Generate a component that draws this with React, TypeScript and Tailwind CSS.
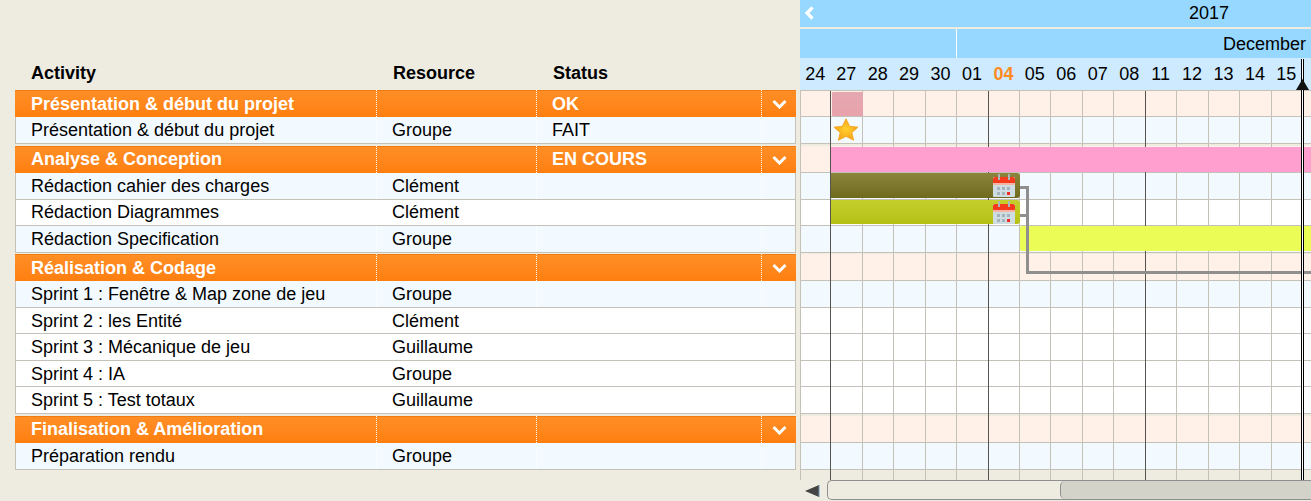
const days = ['24', '27', '28', '29', '30', '01', '04', '05', '06', '07', '08', '11', '12', '13', '14', '15']

type Row = {
  name: string
  resource?: string
  status?: string
  group?: boolean
  white?: boolean
  h: string
  lead?: string
}

const rows: Row[] = [
  { name: 'Présentation & début du projet', status: 'OK', group: true, h: 'h-[27px]', lead: 'leading-[29px]' },
  { name: 'Présentation & début du projet', resource: 'Groupe', status: 'FAIT', h: 'h-[27px] mb-[2px]' },
  { name: 'Analyse & Conception', status: 'EN COURS', group: true, h: 'h-[27px]' },
  { name: 'Rédaction cahier des charges', resource: 'Clément', h: 'h-[27px]' },
  { name: 'Rédaction Diagrammes', resource: 'Clément', white: true, h: 'h-[26px]', lead: 'leading-[25px]' },
  { name: 'Rédaction Specification', resource: 'Groupe', h: 'h-[27px] mb-[1px]' },
  { name: 'Réalisation & Codage', group: true, h: 'h-[27px]', lead: 'leading-[29px]' },
  { name: 'Sprint 1 : Fenêtre & Map zone de jeu', resource: 'Groupe', h: 'h-[27px]' },
  { name: 'Sprint 2 : les Entité', resource: 'Clément', white: true, h: 'h-[26px]' },
  { name: 'Sprint 3 : Mécanique de jeu', resource: 'Guillaume', white: true, h: 'h-[27px]' },
  { name: 'Sprint 4 : IA', resource: 'Groupe', white: true, h: 'h-[26px]' },
  { name: 'Sprint 5 : Test totaux', resource: 'Guillaume', white: true, h: 'h-[27px] mb-[2px]' },
  { name: 'Finalisation & Amélioration', group: true, h: 'h-[27px]' },
  { name: 'Préparation rendu', resource: 'Groupe', h: 'h-[27px]' },
]

function Chevron() {
  return (
    <svg width="15" height="10" viewBox="0 0 15 10" className="ml-px block">
      <path d="M1.5 2 L7.5 8 L13.5 2" fill="none" stroke="white" strokeWidth="3" />
    </svg>
  )
}

function CalendarIcon() {
  return (
    <svg width="22" height="23" viewBox="0 0 22 23" className="block">
      <rect x="0" y="3" width="22" height="20" rx="1" fill="#cfdde3" />
      <path d="M0 10 V5 Q0 3 2 3 H20 Q22 3 22 5 V10 Z" fill="#f63a1e" />
      <rect x="0" y="9" width="22" height="2" fill="#f6b4a4" />
      <rect x="5" y="0" width="2" height="6" fill="#aab6ba" />
      <rect x="15" y="0" width="2" height="6" fill="#aab6ba" />
      <rect x="4" y="13" width="3" height="3" fill="#a5b3ba" />
      <rect x="9" y="13" width="3" height="3" fill="#a5b3ba" />
      <rect x="14" y="13" width="3" height="3" fill="#a5b3ba" />
      <rect x="4" y="18" width="3" height="3" fill="#a5b3ba" />
      <rect x="9" y="18" width="3" height="3" fill="#a5b3ba" />
      <rect x="14" y="18" width="3" height="3" fill="#f02a20" />
    </svg>
  )
}

function LeftTable() {
  return (
    <div className="w-[800px] shrink-0 pl-[15px] pr-[4px]">
      <div className="flex h-[90px] items-end pb-[3px] text-[18px] font-bold text-black">
        <div className="w-[362px] pl-[16px]">Activity</div>
        <div className="w-[160px] pl-[16px]">Resource</div>
        <div className="pl-[16px]">Status</div>
      </div>
      {rows.map((r) => (
        <div
          key={r.name + r.group}
          className={`flex items-center text-[18px] ${r.h} ${r.lead ?? 'leading-[27px]'} ${
            r.group
              ? 'bg-gradient-to-b from-[#ff8f26] to-[#ff7f0f] font-bold text-white shadow-[inset_0_1px_0_#f27a12]'
              : r.white
                ? 'border-x border-b border-[#c4c2b8] bg-white text-black'
                : 'border-x border-b border-[#c4c2b8] bg-[#f2faff] text-black'
          }`}
        >
          <div className={`h-full border-r border-dotted border-white ${r.group ? 'w-[362px] pl-[16px]' : 'w-[361px] pl-[15px]'}`}>
            {r.name}
          </div>
          <div className="h-full w-[160px] border-r border-dotted border-white pl-[15px]">{r.resource}</div>
          <div className="h-full w-[225px] border-r border-dotted border-white pl-[15px]">{r.status}</div>
          <div className="flex flex-1 items-center justify-center">{r.group && <Chevron />}</div>
        </div>
      ))}
    </div>
  )
}

function GanttHeader() {
  return (
    <div className="h-[90px] text-[18px] text-black">
      <div className="relative h-[27px] bg-[#96d8ff] pl-[389px] leading-[26px]">
        <svg width="12" height="14" viewBox="0 0 12 14" className="absolute left-[3px] top-[6px]">
          <path d="M9.5 1.5 L4 7 L9.5 12.5" fill="none" stroke="white" strokeWidth="3.2" />
        </svg>
        <span>2017</span>
      </div>
      <div className="mt-[2px] flex h-[29px]">
        <div className="w-[157px] border-r border-white bg-[#96d8ff]" />
        <div className="flex-1 bg-[#96d8ff] pr-[5px] text-right leading-[31px]">December</div>
      </div>
      <div className="flex h-[32px] items-center bg-[#cdeafe]">
        {days.map((d, i) => (
          <div
            key={d}
            className={`shrink-0 text-center ${i === 0 ? 'w-[30.5px]' : 'w-[31.45px]'} ${
              d === '04' ? 'font-bold text-[#ff8a22]' : ''
            }`}
          >
            {d}
          </div>
        ))}
      </div>
    </div>
  )
}

function GanttBody() {
  return (
    <div className="relative h-[390px] overflow-hidden">
      {rows.map((r) => (
        <div
          key={r.name + r.group}
          className={`border-b border-[#c4c2b8] ${r.h} ${
            r.group ? 'bg-[#fff1e7]' : r.white ? 'bg-white' : 'bg-[#f2faff]'
          }`}
        />
      ))}

      {/* grid columns over the row backgrounds */}
      <div className="absolute inset-0 flex">
        <div className="w-px bg-[#c4c2b8]" />
        {days.map((d, i) => (
          <div
            key={d}
            className={`shrink-0 border-r ${i === 0 ? 'w-[30.4px]' : 'w-[31.45px]'} ${
              d === '24' || d === '01' || d === '08' ? 'border-[#55544f]' : 'border-[#c4c2b8]'
            }`}
          />
        ))}
      </div>
      <div className="absolute inset-x-0 top-0 h-px bg-[#c4c2b8]" />

      {/* bars */}
      <div className="absolute left-[32px] top-[2px] h-[24px] w-[31px] rounded-[1px] bg-gradient-to-b from-[#e5a8b0] to-[#e8a2ac]" />
      <svg width="28" height="26" viewBox="0 0 28 28" preserveAspectRatio="none" className="absolute left-[32px] top-[27px]">
        <defs>
          <radialGradient id="star" cx="0.5" cy="0.5" r="0.55">
            <stop offset="0" stopColor="#ffd02e" />
            <stop offset="1" stopColor="#f6a016" />
          </radialGradient>
        </defs>
        <path
          d="M14 2 L17.6 10 L26 11 L19.8 16.8 L21.6 25 L14 20.8 L6.4 25 L8.2 16.8 L2 11 L10.4 10 Z"
          fill="url(#star)"
          stroke="#f5a623"
          strokeLinejoin="round"
        />
      </svg>
      <div className="absolute left-[31px] right-0 top-[57px] h-[25px] bg-[#ff9fd0]" />
      <div className="absolute left-[31px] top-[83px] flex h-[25px] w-[189px] items-center justify-end rounded-r-[3px] bg-gradient-to-b from-[#8a853a] to-[#6f6a1c] pr-[5px]">
        <CalendarIcon />
      </div>
      <div className="absolute left-[31px] top-[110px] flex h-[24px] w-[189px] items-center justify-end rounded-r-[3px] bg-gradient-to-b from-[#c4cf2c] to-[#b5c014] pr-[5px]">
        <CalendarIcon />
      </div>
      <div className="absolute left-[220px] right-0 top-[136px] h-[25px] rounded-l-[2px] bg-[#eafc55]" />

      {/* dependency links */}
      <div className="absolute left-[220px] top-[96px] h-[3px] w-[9px] bg-[#8f8f8f]" />
      <div className="absolute left-[220px] top-[124px] h-[3px] w-[9px] bg-[#8f8f8f]" />
      <div className="absolute left-[226px] top-[96px] h-[87px] w-[3px] bg-[#8f8f8f]" />
      <div className="absolute left-[226px] right-0 top-[181px] h-[3px] bg-[#8f8f8f]" />
    </div>
  )
}

export default function App() {
  return (
    <div className="flex h-[501px] w-[1311px] overflow-hidden bg-[#eeece1] font-['Liberation_Sans',Arial,sans-serif]">
      <LeftTable />
      <div className="relative min-w-0 flex-1">
        <GanttHeader />
        <GanttBody />
        {/* today marker */}
        <div className="absolute left-[501px] top-[59px] h-[421px] w-[3px] border-x border-black bg-white" />
        <svg width="13" height="11" viewBox="0 0 13 11" className="absolute left-[496px] top-[79px]">
          <path d="M6.5 0 L13 11 H0 Z" fill="#111" />
        </svg>
        <div className="absolute inset-x-0 top-[480px] flex h-[21px] items-center">
          <svg width="16" height="14" viewBox="0 0 16 14" className="ml-[5px] mr-[6px] shrink-0">
            <path d="M14 1 V13 L0 7 Z" fill="#444" />
            <path d="M14 1 V13" stroke="#6f8fb5" strokeWidth="1" />
          </svg>
          <div className="flex h-[20px] flex-1 self-start justify-end rounded-l-[5px] border border-r-0 border-[#8f8f8f] bg-[#eeece1]">
            <div className="w-[251px] rounded-l-[5px] border-l border-[#8f8f8f] bg-[#d4d3ca]" />
          </div>
        </div>
      </div>
    </div>
  )
}
